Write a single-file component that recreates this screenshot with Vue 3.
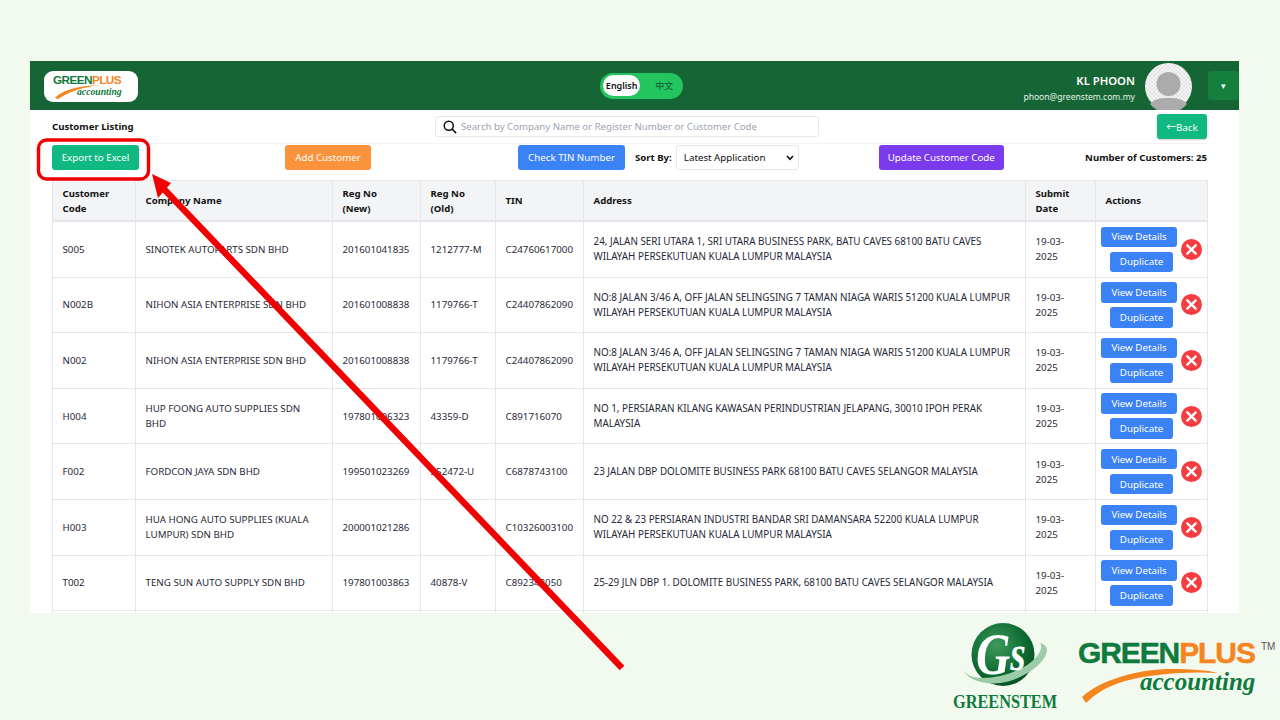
<template>
  <div class="stage">
    <div class="window">
      <header class="topbar">
        <div class="brand">
          <div class="brand-name"><span class="g">GREEN</span><span class="o">PLUS</span></div>
          <svg class="brand-swoosh" width="50" height="16" viewBox="0 0 50 16">
            <path d="M1 15 C8 8 20 3 46 2 C30 4 16 8 4 16 Z" fill="#f5851f" />
          </svg>
          <div class="brand-sub">accounting</div>
        </div>
        <div class="lang">
          <span class="lang-on">English</span>
          <span class="lang-off">中文</span>
        </div>
        <div class="user">
          <div class="user-text">
            <div class="user-name">KL PHOON</div>
            <div class="user-mail">phoon@greenstem.com.my</div>
          </div>
          <svg class="avatar" width="47" height="47" viewBox="0 0 47 47">
            <defs>
              <pattern id="checker" width="4" height="4" patternUnits="userSpaceOnUse">
                <rect width="4" height="4" fill="#f4f4f4" />
                <rect width="2" height="2" fill="#e4e4e4" />
                <rect x="2" y="2" width="2" height="2" fill="#e4e4e4" />
              </pattern>
            </defs>
            <circle cx="23.5" cy="23.5" r="23.5" fill="url(#checker)" />
            <circle cx="23.5" cy="21" r="12" fill="#ababab" />
            <path d="M5 41 C9 36 14 35 23.5 35 C33 35 38 36 42 41 A23.5 23.5 0 0 1 5 41 Z" fill="#ababab" />
          </svg>
          <button class="menu-btn" type="button">▾</button>
        </div>
      </header>

      <main class="content">
        <div class="title-row">
          <strong class="page-title">Customer Listing</strong>
          <div class="search">
            <svg width="14" height="14" viewBox="0 0 16 16" fill="none" stroke="#111" stroke-width="1.7">
              <circle cx="6.6" cy="6.6" r="5.2" />
              <path d="M10.4 10.4 L15 15" />
            </svg>
            <span>Search by Company Name or Register Number or Customer Code</span>
          </div>
          <button class="btn green back" type="button">←Back</button>
        </div>

        <div class="tool-row">
          <button class="btn green export" type="button">Export to Excel</button>
          <button class="btn orange" type="button">Add Customer</button>
          <div class="tool-mid">
            <button class="btn blue" type="button">Check TIN Number</button>
            <strong class="sort-label">Sort By:</strong>
            <div class="select">Latest Application
              <svg width="8" height="6" viewBox="0 0 8 6" fill="none" stroke="#111" stroke-width="1.6"><path d="M1 1 L4 4.4 L7 1" /></svg>
            </div>
          </div>
          <button class="btn purple" type="button">Update Customer Code</button>
          <strong class="count">Number of Customers: 25</strong>
        </div>

        <table class="grid">
          <colgroup>
            <col v-for="w in colWidths" :key="w.id" :style="{ width: w.px + 'px' }" />
          </colgroup>
          <thead>
            <tr>
              <th>Customer<br />Code</th>
              <th>Company Name</th>
              <th>Reg No<br />(New)</th>
              <th>Reg No<br />(Old)</th>
              <th>TIN</th>
              <th>Address</th>
              <th>Submit<br />Date</th>
              <th>Actions</th>
            </tr>
          </thead>
          <tbody>
            <tr v-for="row in rows" :key="row.code">
              <td>{{ row.code }}</td>
              <td>{{ row.name }}</td>
              <td>{{ row.regNew }}</td>
              <td>{{ row.regOld }}</td>
              <td>{{ row.tin }}</td>
              <td>{{ row.address }}</td>
              <td>19-03-2025</td>
              <td class="actions">
                <div class="action-wrap">
                  <div class="action-btns">
                    <button class="mini" type="button">View Details</button>
                    <button class="mini dup" type="button">Duplicate</button>
                  </div>
                  <svg class="del" width="21" height="21" viewBox="0 0 21 21">
                    <circle cx="10.5" cy="10.5" r="10.5" fill="#f63c40" />
                    <path d="M6.3 6.3 L14.7 14.7 M14.7 6.3 L6.3 14.7" stroke="#fff" stroke-width="2.4" stroke-linecap="round" />
                  </svg>
                </div>
              </td>
            </tr>
            <tr class="cut-row"><td v-for="n in 8" :key="n"></td></tr>
          </tbody>
        </table>
      </main>
    </div>

    <!-- annotation drawn over the screenshot -->
    <svg class="overlay" width="1280" height="720" viewBox="0 0 1280 720">
      <rect x="38.5" y="140" width="110" height="39" rx="8" fill="none" stroke="#f00000" stroke-width="3.4" />
      <path d="M622 668 L161 186" stroke="#f00000" stroke-width="6.4" fill="none" />
      <polygon points="152,174 171,183 158,198" fill="#f00000" />
    </svg>

    <div class="logo-gs">
      <svg width="86" height="68" viewBox="0 0 86 68">
        <defs>
          <radialGradient id="gsBall" cx="0.4" cy="0.35" r="0.75">
            <stop offset="0" stop-color="#3c9a5a" />
            <stop offset="0.6" stop-color="#0d6b32" />
            <stop offset="1" stop-color="#04491f" />
          </radialGradient>
        </defs>
        <circle cx="41" cy="32.5" r="31.5" fill="url(#gsBall)" />
        <path d="M1 48 C6 58 22 63 38 61 C60 58 84 42 85 28 C85 25 82 22 78 21 C82 26 76 36 62 45 C46 54 24 58 12 55 C7 54 3 51 1 48 Z" fill="#9ccba8" />
        <text class="gs-mark" transform="translate(14 52) scale(0.95 1.2)"><tspan font-size="50">G</tspan><tspan font-size="42" dy="-3">s</tspan></text>
      </svg>
      <div class="gs-name">GREENSTEM</div>
    </div>

    <div class="logo-plus">
      <div class="plus-name"><span class="g">GREEN</span><span class="o">PLUS</span><span class="tm">TM</span></div>
      <svg class="plus-swoosh" width="150" height="36" viewBox="0 0 150 36">
        <path d="M1 28 C20 10 60 0 90 0 C110 0 126 1 137 4 C100 2 60 6 35 15 C22 20 12 27 5 34 Z" fill="#f5851f" />
      </svg>
      <div class="plus-sub">accounting</div>
    </div>
  </div>
</template>

<script setup>
const colWidths = [
  { id: 'code', px: 83 },
  { id: 'name', px: 197 },
  { id: 'new', px: 88 },
  { id: 'old', px: 75 },
  { id: 'tin', px: 88 },
  { id: 'addr', px: 442 },
  { id: 'date', px: 70 },
  { id: 'act', px: 112 },
];

const rows = [
  {
    code: 'S005',
    name: 'SINOTEK AUTOPARTS SDN BHD',
    regNew: '201601041835',
    regOld: '1212777-M',
    tin: 'C24760617000',
    address: '24, JALAN SERI UTARA 1, SRI UTARA BUSINESS PARK, BATU CAVES 68100 BATU CAVES WILAYAH PERSEKUTUAN KUALA LUMPUR MALAYSIA',
  },
  {
    code: 'N002B',
    name: 'NIHON ASIA ENTERPRISE SDN BHD',
    regNew: '201601008838',
    regOld: '1179766-T',
    tin: 'C24407862090',
    address: 'NO:8 JALAN 3/46 A, OFF JALAN SELINGSING 7 TAMAN NIAGA WARIS 51200 KUALA LUMPUR WILAYAH PERSEKUTUAN KUALA LUMPUR MALAYSIA',
  },
  {
    code: 'N002',
    name: 'NIHON ASIA ENTERPRISE SDN BHD',
    regNew: '201601008838',
    regOld: '1179766-T',
    tin: 'C24407862090',
    address: 'NO:8 JALAN 3/46 A, OFF JALAN SELINGSING 7 TAMAN NIAGA WARIS 51200 KUALA LUMPUR WILAYAH PERSEKUTUAN KUALA LUMPUR MALAYSIA',
  },
  {
    code: 'H004',
    name: 'HUP FOONG AUTO SUPPLIES SDN BHD',
    regNew: '197801006323',
    regOld: '43359-D',
    tin: 'C891716070',
    address: 'NO 1, PERSIARAN KILANG KAWASAN PERINDUSTRIAN JELAPANG, 30010 IPOH PERAK MALAYSIA',
  },
  {
    code: 'F002',
    name: 'FORDCON JAYA SDN BHD',
    regNew: '199501023269',
    regOld: '352472-U',
    tin: 'C6878743100',
    address: '23 JALAN DBP DOLOMITE BUSINESS PARK 68100 BATU CAVES SELANGOR MALAYSIA',
  },
  {
    code: 'H003',
    name: 'HUA HONG AUTO SUPPLIES (KUALA LUMPUR) SDN BHD',
    regNew: '200001021286',
    regOld: '',
    tin: 'C10326003100',
    address: 'NO 22 & 23 PERSIARAN INDUSTRI BANDAR SRI DAMANSARA 52200 KUALA LUMPUR WILAYAH PERSEKUTUAN KUALA LUMPUR MALAYSIA',
  },
  {
    code: 'T002',
    name: 'TENG SUN AUTO SUPPLY SDN BHD',
    regNew: '197801003863',
    regOld: '40878-V',
    tin: 'C892348050',
    address: '25-29 JLN DBP 1. DOLOMITE BUSINESS PARK, 68100 BATU CAVES SELANGOR MALAYSIA',
  },
];
</script>

<style>
html,
body {
  margin: 0;
  background: #f2faf0;
}
</style>

<style scoped>
.stage {
  position: relative;
  width: 1280px;
  height: 720px;
  padding: 61px 41px 0 30px;
  box-sizing: border-box;
  overflow: hidden;
  background: #f2faf0;
  font-family: "Noto Sans", "Noto Sans CJK SC", sans-serif;
  font-size: 9.75px;
  color: #1f2937;
}

.window {
  height: 552px;
  overflow: hidden;
  background: #fff;
}

.topbar {
  height: 49px;
  display: flex;
  align-items: center;
  justify-content: space-between;
  padding: 0 0 0 14px;
  background: #166534;
}

.brand {
  position: relative;
  width: 94px;
  height: 31px;
  margin-top: 2px;
  background: #fff;
  border-radius: 9px;
  box-sizing: border-box;
  padding: 3px 0 0 9px;
}

.brand-name {
  font-family: "Liberation Sans", sans-serif;
  font-weight: 700;
  font-size: 11.8px;
  letter-spacing: -0.6px;
  line-height: 13px;
}

.g {
  color: #0f7a3d;
}

.o {
  color: #f5851f;
}

.brand-swoosh {
  position: absolute;
  left: 10px;
  top: 12px;
}

.brand-sub {
  position: absolute;
  left: 33px;
  top: 15px;
  font-family: "Liberation Serif", serif;
  font-style: italic;
  font-weight: 700;
  font-size: 9.7px;
  color: #0f7a3d;
}

.lang {
  display: flex;
  align-items: center;
  width: 83px;
  height: 26px;
  margin-left: 122px;
  border-radius: 13px;
  background: #22c55e;
  box-sizing: border-box;
  padding: 0 3px;
  font-size: 9px;
}

.lang-on {
  width: 37px;
  height: 21px;
  line-height: 21px;
  border-radius: 11px;
  background: #fff;
  color: #111;
  font-weight: 600;
  text-align: center;
}

.lang-off {
  margin-left: 15px;
  color: #14532d;
}

.user {
  display: flex;
  align-items: center;
}

.user-text {
  text-align: right;
  color: #fff;
  margin-right: 10px;
  padding-top: 4px;
}

.user-name {
  font-size: 11.3px;
  font-weight: 600;
  line-height: 18px;
}

.user-mail {
  font-size: 8.55px;
  line-height: 14px;
  color: #e5efe8;
}

.avatar {
  display: block;
  margin-top: 1px;
}

.menu-btn {
  width: 31px;
  height: 29px;
  margin-left: 16px;
  border: 0;
  border-radius: 3px;
  background: #15803d;
  color: #fff;
  font-size: 9px;
  padding: 0;
}

.content {
  padding: 0 32px 0 22px;
}

.title-row {
  display: flex;
  align-items: center;
  height: 33px;
  border-bottom: 1px solid #f1f3f5;
}

.page-title {
  width: 383px;
  color: #111;
  font-size: 9.6px;
}

.search {
  display: flex;
  align-items: center;
  gap: 4px;
  width: 384px;
  height: 21px;
  box-sizing: border-box;
  padding-left: 7px;
  border: 1px solid #e5e7eb;
  border-radius: 3px;
  color: #9ca3af;
  font-size: 9.65px;
}

.btn {
  height: 25px;
  border: 0;
  border-radius: 3px;
  color: #fff;
  font-family: inherit;
  font-size: 9.75px;
  padding: 0;
  white-space: nowrap;
}

.back {
  margin-left: auto;
  width: 50px;
  box-shadow: 0 1px 2px rgba(0, 0, 0, 0.2);
}

.green {
  background: #10b981;
}

.export {
  width: 87px;
}

.orange {
  width: 86px;
  background: #fb923c;
  margin-left: 146px;
}

.blue {
  width: 107px;
  background: #3b82f6;
}

.purple {
  width: 125px;
  background: #7c3aed;
  margin-left: 80px;
}

.tool-row {
  display: flex;
  align-items: center;
  box-sizing: border-box;
  height: 26px;
  margin-bottom: 10px;
  padding-top: 1px;
}

.tool-mid {
  display: flex;
  align-items: center;
  margin-left: 147px;
  color: #111;
}

.sort-label {
  margin: 0 4px 0 10px;
  font-size: 9.6px;
}

.select {
  display: flex;
  align-items: center;
  justify-content: space-between;
  width: 123px;
  height: 25px;
  box-sizing: border-box;
  padding: 0 4px 0 7px;
  border: 1px solid #e5e7eb;
  border-radius: 3px;
}

.count {
  margin-left: auto;
  color: #111;
  font-size: 9.6px;
}

.grid {
  width: 1155px;
  table-layout: fixed;
  border-collapse: collapse;
}

.grid th,
.grid td {
  border: 1px solid #e5e7eb;
  padding: 0 9.5px;
  text-align: left;
  line-height: 15px;
}

.grid th {
  height: 39px;
  background: #f3f4f6;
  color: #111;
  font-weight: 700;
  font-size: 9.6px;
  border-bottom-width: 2px;
}

.grid td {
  height: 54.6px;
}

.grid td:nth-child(2) {
  padding-right: 12px;
}

.grid td:nth-child(6) {
  font-size: 9.85px;
}

.actions {
  padding: 0 5px !important;
}

.action-wrap {
  display: flex;
  align-items: center;
  gap: 4px;
}

.action-btns {
  display: flex;
  flex-direction: column;
  align-items: center;
  gap: 4.5px;
}

.mini {
  width: 76px;
  height: 20.5px;
  padding: 0;
  border: 0;
  border-radius: 3px;
  background: #3b82f6;
  color: #fff;
  font-family: inherit;
  font-size: 9.75px;
  white-space: nowrap;
}

.dup {
  width: 63px;
  margin-left: 5px;
}

.del {
  flex: none;
}

.cut-row td {
  height: 30px;
}

.overlay {
  position: absolute;
  left: 0;
  top: 0;
  pointer-events: none;
}

.logo-gs {
  position: absolute;
  left: 952px;
  top: 622px;
  width: 116px;
}

.logo-gs svg {
  display: block;
  margin-left: 10px;
}

.gs-mark {
  font-family: "Liberation Serif", serif;
  font-style: italic;
  font-weight: 700;
  fill: #fff;
}

.gs-name {
  margin: 2px 0 0 1px;
  font-family: "Liberation Serif", serif;
  font-weight: 700;
  font-size: 18px;
  line-height: 20px;
  color: #0f7a3d;
  transform: scaleX(0.905);
  transform-origin: 0 50%;
  white-space: nowrap;
}

.logo-plus {
  position: absolute;
  left: 1078px;
  top: 637px;
  width: 200px;
  height: 70px;
}

.plus-name {
  font-family: "Liberation Sans", sans-serif;
  font-weight: 700;
  font-size: 30px;
  letter-spacing: -1.1px;
  line-height: 32px;
  white-space: nowrap;
  -webkit-text-stroke: 0.5px currentColor;
}

.tm {
  position: absolute;
  left: 183px;
  top: 4px;
  font-size: 10px;
  letter-spacing: 0;
  line-height: 12px;
  font-weight: 400;
  color: #555;
  -webkit-text-stroke: 0;
}

.plus-swoosh {
  position: absolute;
  left: 3px;
  top: 32px;
}

.plus-sub {
  position: absolute;
  left: 62px;
  top: 29px;
  font-family: "Liberation Serif", serif;
  font-style: italic;
  font-weight: 700;
  font-size: 25px;
  line-height: 32px;
  color: #0f7a3d;
}
</style>
